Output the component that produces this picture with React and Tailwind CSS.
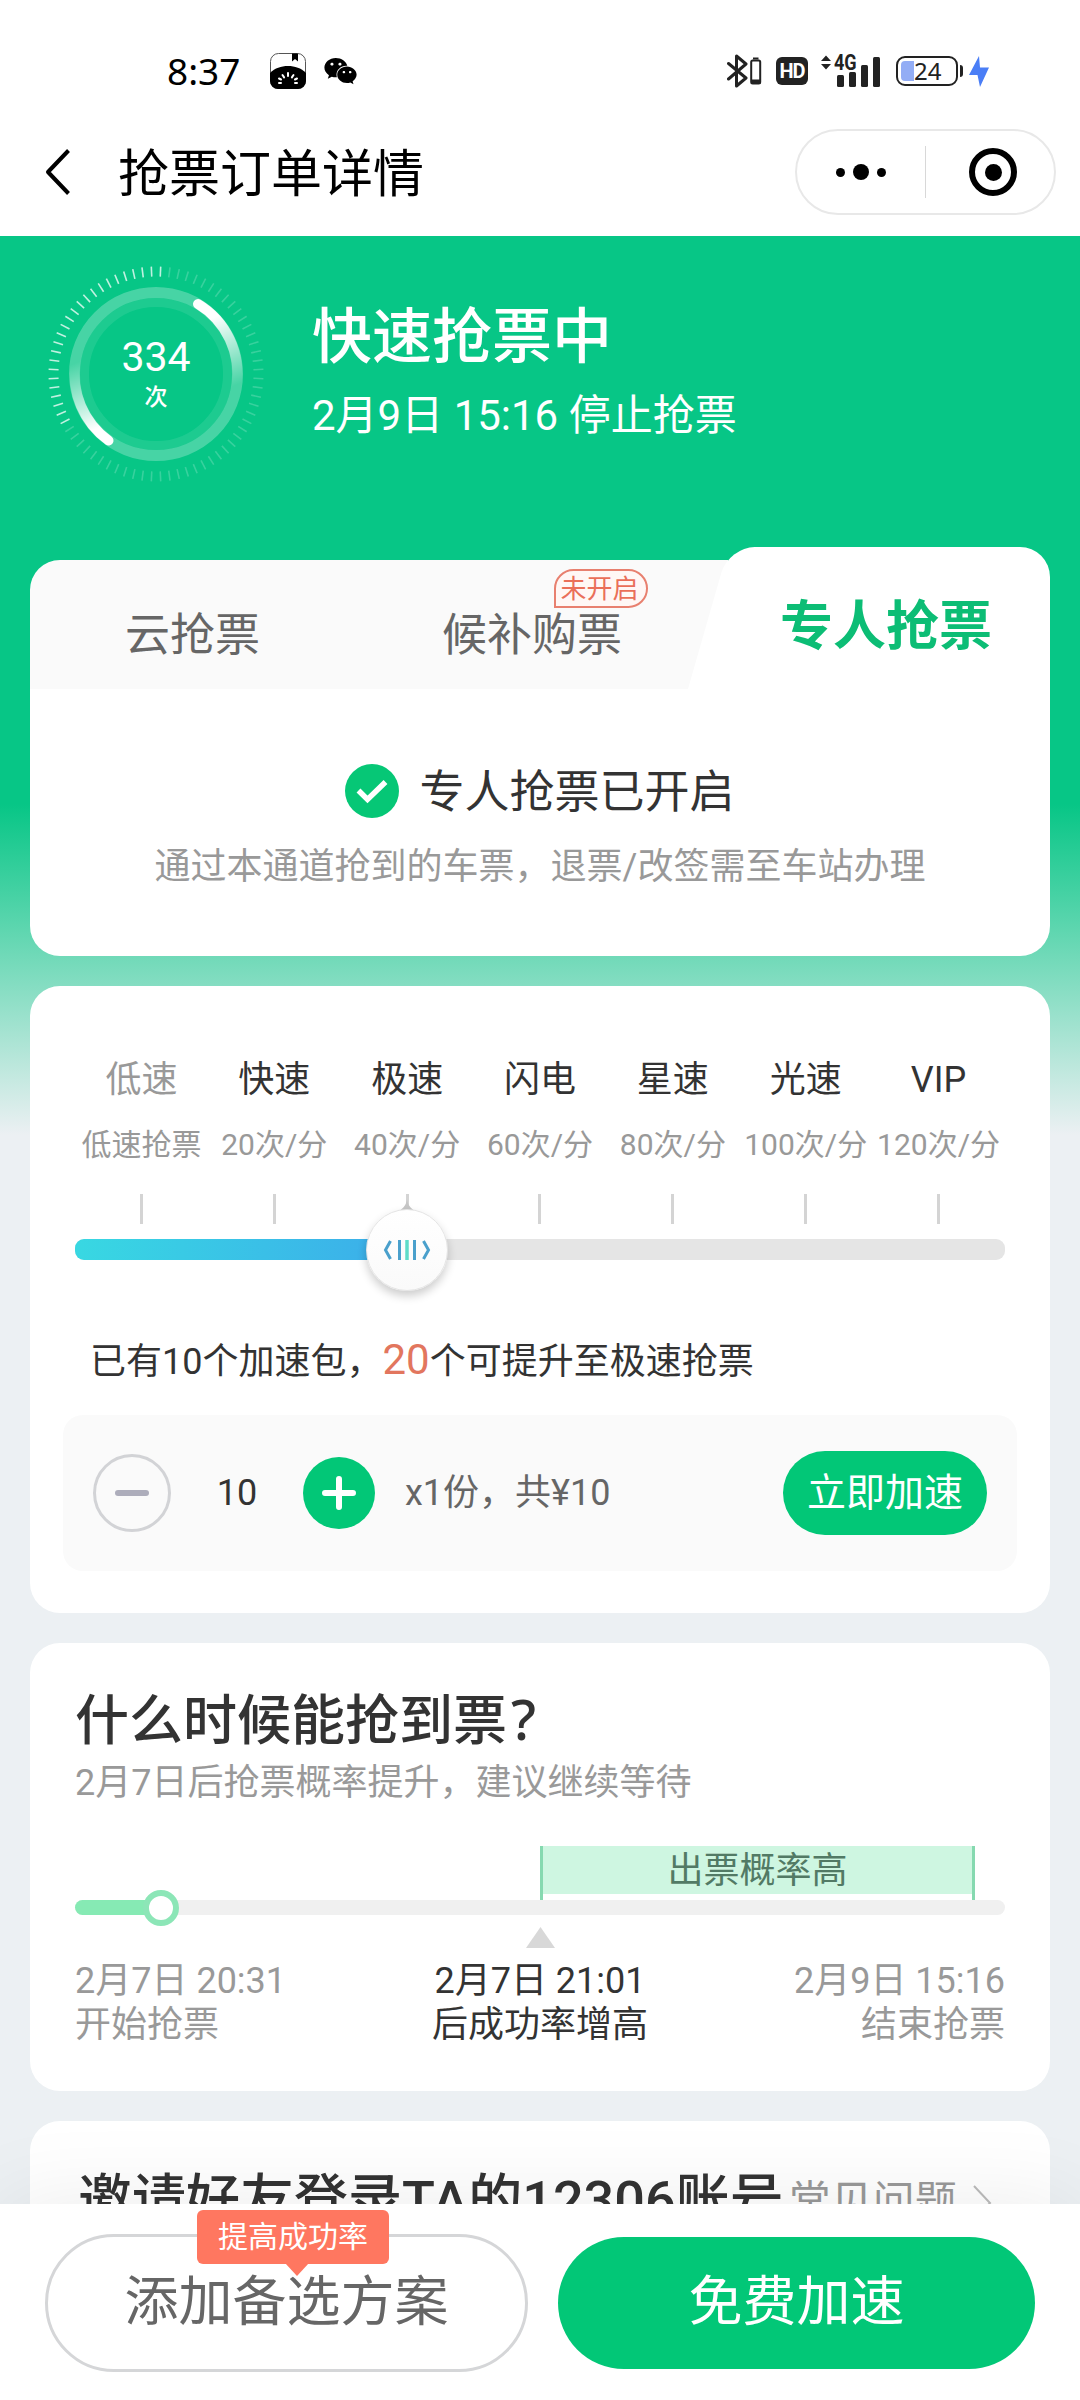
import { FaWeixin } from 'react-icons/fa';

const SPEEDS = [
  { name: '低速', rate: '低速抢票', disabled: true },
  { name: '快速', rate: '20次/分' },
  { name: '极速', rate: '40次/分' },
  { name: '闪电', rate: '60次/分' },
  { name: '星速', rate: '80次/分' },
  { name: '光速', rate: '100次/分' },
  { name: 'VIP', rate: '120次/分' },
];

const DIAL_TICKS = Array.from({ length: 72 }, (_, i) => i * 5 - 177.5);

function NotesAppIcon() {
  return (
    <svg className="h-9 w-9" viewBox="0 0 36 36" fill="none">
      <rect x="0.5" y="0.5" width="35" height="35" rx="8" stroke="#555" />
      <path d="M22 0.5h6v8l-3-2.500-3 2.500z" fill="#000" />
      <path d="M0 20C5 15 11 13 18 13s13 2 18 7v8a8 8 0 0 1-8 8H8a8 8 0 0 1-8-8z" fill="#000" />
      <g stroke="#fff" strokeWidth="2" strokeLinecap="round">
        <path d="M18 20v3M12.500 22l1.600 2.400M23.500 22l-1.600 2.400M9 25.500l2 1M27 25.500l-2 1M9 30h2M25 30h2" />
      </g>
    </svg>
  );
}

function BluetoothIcon() {
  return (
    <svg className="h-[34px] w-[36px]" viewBox="0 0 36 34" fill="none" stroke="#222">
      <path
        d="M1.500 9.500L19 24 9.500 32V2L19 10 1.500 25"
        strokeWidth="3"
        strokeLinejoin="round"
        strokeLinecap="round"
      />
      <rect x="24.200" y="6.500" width="9" height="23" rx="1.500" strokeWidth="2" />
      <path d="M26 4.500h5.500" strokeWidth="2" />
      <path d="M24 27.500h9.500" strokeWidth="4" />
    </svg>
  );
}

function SignalIcon() {
  return (
    <div className="relative h-8 w-[60px]">
      <svg className="h-8 w-[60px]" viewBox="0 0 60 32" fill="#222">
        <path d="M5 0.500l5 5.500H0zM5 14.500l5-5.500H0z" />
        <rect x="16" y="20" width="7" height="12" rx="1.500" />
        <rect x="28" y="17" width="7" height="15" rx="1.500" />
        <rect x="40" y="10" width="7" height="22" rx="1.500" />
        <rect x="52" y="2" width="7" height="30" rx="1.500" />
      </svg>
      <span className="absolute left-[13px] -top-px origin-left scale-x-[0.82] text-[22px] leading-[18px] font-bold text-[#222]">
        4G
      </span>
    </div>
  );
}

function StatusBar() {
  return (
    <div className="flex h-[106px] items-center pl-[167px] pr-[91px] pt-[36px]">
      <span className="w-[103px] pb-px font-['Noto_Sans'] text-[37px] leading-none text-black">8:37</span>
      <NotesAppIcon />
      <FaWeixin className="ml-[17px] h-[30px] w-[35px] text-black" />
      <div className="ml-auto flex items-center">
        <BluetoothIcon />
        <div className="ml-[13px] flex h-7 w-8 items-center justify-center rounded-md bg-[#222] text-[20px] leading-none font-bold tracking-tighter text-white">
          HD
        </div>
        <div className="ml-[13px]">
          <SignalIcon />
        </div>
        <div className="relative ml-[15px] flex h-[30px] w-[62px] items-center rounded-[9px] border-2 border-[#222] font-['Noto_Sans'] text-[24px] leading-none">
          <span className="ml-[3px] h-5 w-[13px] rounded-l-[4px] bg-[#93adf5]" />
          <span className="text-[#222]">24</span>
        </div>
        <span className="ml-0.5 h-3 w-[3px] rounded-r bg-[#222]" />
        <svg className="ml-[6px] h-[31px] w-5" viewBox="0 0 20 31" fill="#4a7ef6">
          <path d="M10 0L0 19h8.500L11 31l9-19.500h-9z" />
        </svg>
      </div>
    </div>
  );
}

function NavBar() {
  return (
    <div className="flex h-[130px] items-center pt-[2px] pl-[45px] pr-6">
      <svg className="h-[48px] w-[26px]" viewBox="0 0 26 48" fill="none" stroke="#000" strokeWidth="4">
        <path d="M23.500 2.500L3 24l20.500 21.500" strokeLinejoin="round" />
      </svg>
      <h1 className="ml-[47px] pt-[4px] text-[51px] leading-none text-black">抢票订单详情</h1>
      <div className="ml-auto flex h-[86px] w-[261px] items-center rounded-full border-2 border-[#e8e8e8]">
        <div className="flex w-[128px] items-center justify-center gap-[8px] text-black">
          <span className="h-[9px] w-[9px] rounded-full bg-black" />
          <span className="h-4 w-4 rounded-full bg-black" />
          <span className="h-[9px] w-[9px] rounded-full bg-black" />
        </div>
        <span className="h-[52px] w-px bg-[#d8d8d8]" />
        <div className="ml-[43px] flex h-12 w-12 items-center justify-center rounded-full border-[6px] border-black">
          <span className="h-[17px] w-[17px] rounded-full bg-black" />
        </div>
      </div>
    </div>
  );
}

function Dial() {
  return (
    <div className="relative h-[220px] w-[220px]">
      <svg className="h-full w-full" viewBox="-110 -110 220 220" fill="none">
        <defs>
          <linearGradient id="arcRight" gradientUnits="userSpaceOnUse" x1="44" y1="-70" x2="78" y2="12">
            <stop offset="0.2" stopColor="#fff" />
            <stop offset="1" stopColor="#fff" stopOpacity="0" />
          </linearGradient>
          <linearGradient id="arcLeft" gradientUnits="userSpaceOnUse" x1="-46" y1="68" x2="-78" y2="-12">
            <stop offset="0.2" stopColor="#fff" />
            <stop offset="1" stopColor="#fff" stopOpacity="0" />
          </linearGradient>
        </defs>
        {DIAL_TICKS.map((deg) => (
          <line
            key={deg}
            y1="-107.500"
            y2="-97.500"
            transform={`rotate(${deg})`}
            stroke="#fff"
            strokeWidth="1.600"
            strokeOpacity={deg >= -118 && deg <= 3 ? 0.75 : 0.2}
          />
        ))}
        <circle r="81.500" stroke="#fff" strokeOpacity="0.26" strokeWidth="11" />
        <circle r="71.500" stroke="#fff" strokeOpacity="0.09" strokeWidth="9" />
        <path d="M42 -70A81.500 81.500 0 0 1 80.500 12" stroke="url(#arcRight)" strokeWidth="10" strokeLinecap="round" />
        <path d="M-47.500 66.500A81.500 81.500 0 0 1 -80.500 -12" stroke="url(#arcLeft)" strokeWidth="10" strokeLinecap="round" />
      </svg>
      <div className="absolute inset-0 flex flex-col items-center pt-[71px] text-white">
        <span className="text-[41px] leading-[44px]">334</span>
        <span className="mt-[5px] text-[23px] leading-[28px] font-medium">次</span>
      </div>
    </div>
  );
}

function Hero() {
  return (
    <div className="flex h-[311px] pl-[46px] pt-[28px] text-white">
      <Dial />
      <div className="ml-[46px] pt-[42px]">
        <h2 className="text-[60px] leading-[64px] font-medium">快速抢票中</h2>
        <p className="mt-[24px] text-[42px] leading-[44px]">2月9日 15:16 停止抢票</p>
      </div>
    </div>
  );
}

function ChannelCard() {
  return (
    <section className="h-[409px]">
      <div className="flex h-[142px] items-end">
        <div className="flex h-[129px] w-[698px] rounded-tl-[30px] bg-[#fafafa] text-[45px] leading-none text-[#666]">
          <div className="flex w-[325px] items-center justify-center pt-[22px]">云抢票</div>
          <div className="relative flex w-[354px] items-center justify-center pt-[22px]">
            候补购票
            <span className="absolute left-[199px] top-[9px] flex h-[39px] w-[94px] items-center justify-center rounded-[20px] rounded-bl-none border-2 border-[#e8806f] bg-[#fff7f5] pr-[3px] text-[26px] text-[#ea6f59]">
              未开启
            </span>
          </div>
        </div>
        <div className="relative -ml-[40px] h-full flex-1">
          <span className="absolute bottom-0 left-0 h-full w-[200px] origin-bottom-left -skew-x-[16deg] rounded-tl-[26px] bg-white" />
          <span className="absolute bottom-0 right-0 h-full w-[280px] rounded-tr-[30px] bg-white" />
          <div className="relative flex h-full items-center pl-[92px] pt-[18px] text-[53px] leading-none font-bold text-[#0cbd75]">
            专人抢票
          </div>
        </div>
      </div>
      <div className="flex h-[267px] flex-col items-center rounded-b-[30px] bg-white pt-[75px]">
        <div className="flex items-center gap-5">
          <svg className="h-[54px] w-[54px]" viewBox="0 0 54 54" fill="none">
            <circle cx="27" cy="27" r="27" fill="#06c776" />
            <path d="M13.500 26.500l9 9L40.500 18" stroke="#fff" strokeWidth="5.500" />
          </svg>
          <span className="pt-[4px] text-[45px] leading-[50px] text-[#333]">专人抢票已开启</span>
        </div>
        <p className="mt-[29px] text-[36px] leading-[40px] text-[#999]">通过本通道抢到的车票，退票/改签需至车站办理</p>
      </div>
    </section>
  );
}

function SpeedCard() {
  return (
    <section className="mt-[30px] h-[627px] rounded-[30px] bg-white pt-[74px]">
      <div className="mx-[45px] grid grid-cols-7">
        {SPEEDS.map((s) => (
          <div key={s.name} className="flex flex-col items-center whitespace-nowrap">
            <span className={s.disabled ? 'text-[36px] leading-10 text-[#999]' : 'text-[36px] leading-10 text-[#333]'}>
              {s.name}
            </span>
            <span className="mt-[27px] text-[30px] leading-9 text-[#999]">{s.rate}</span>
            <span className="mt-[31px] h-[30px] w-[3px] bg-[#d4d4d4]" />
          </div>
        ))}
      </div>
      <div className="relative mx-[45px] mt-[15px] h-[21px] rounded-[9px] bg-[#e5e5e5]">
        <div className="h-full w-[332px] rounded-l-[9px] bg-linear-to-r from-[#38d8e2] to-[#3cacea]" />
        <svg className="absolute left-[324px] -top-[40px] h-3 w-4" viewBox="0 0 16 12" fill="#c6c6c6">
          <path d="M8 0C8.500 5 11 9 16 12H0C5 9 7.500 5 8 0z" />
        </svg>
        <div className="absolute left-[291px] -top-[30px] flex h-[82px] w-[82px] items-center justify-center rounded-full border border-[#e4e4e4] bg-linear-to-b from-white to-[#fafafa] shadow-[0_5px_10px_rgba(0,0,0,0.2)]">
          <svg className="h-[22px] w-[50px]" viewBox="0 0 50 22" fill="none" stroke="#4aa0cc" strokeWidth="3">
            <path d="M8.500 2L3.500 11l5 9M41.500 2L46.500 11l-5 9M17.500 1v20" />
            <path d="M32.500 1v20" />
            <path d="M25 1v20" stroke="#5fdcc8" strokeWidth="3.500" />
          </svg>
        </div>
      </div>
      <p className="ml-[60px] mt-[78px] text-[36px] leading-[48px] text-[#333]">
        已有10个加速包，<span className="text-[42px] leading-none text-[#e2765e]">20</span>个可提升至极速抢票
      </p>
      <div className="mx-[33px] mt-[29px] flex h-[156px] items-center rounded-[20px] bg-[#fafafa] px-[30px] text-[36px] leading-none text-[#333]">
        <button className="flex h-[78px] w-[78px] items-center justify-center rounded-full border-[3px] border-[#d2d3d6]">
          <span className="h-[6px] w-[34px] rounded-sm bg-[#adadbb]" />
        </button>
        <span className="w-[132px] text-center">10</span>
        <button className="flex h-[72px] w-[72px] items-center justify-center rounded-full bg-[#02c777]">
          <svg className="h-[34px] w-[34px]" viewBox="0 0 34 34" stroke="#fff" strokeWidth="6" strokeLinecap="round">
            <path d="M17 3v28M3 17h28" />
          </svg>
        </button>
        <span className="ml-[30px] text-[#666]">x1份，共¥10</span>
        <button className="ml-auto h-[84px] w-[204px] rounded-full bg-[#02c777] text-[39px] text-white">立即加速</button>
      </div>
    </section>
  );
}

function ForecastCard() {
  return (
    <section className="mt-[30px] h-[448px] rounded-[30px] bg-white px-[45px] pt-[47px]">
      <h2 className="h-[60px] text-[54px] leading-[60px] font-medium text-[#333]">
        什么时候能抢到票<span className="ml-[4px] font-['Noto_Sans'] text-[56px] leading-none">?</span>
      </h2>
      <p className="mt-[13px] text-[36px] leading-10 text-[#999]">2月7日后抢票概率提升，建议继续等待</p>
      <div className="ml-[465px] mt-[43px] h-[54px] w-[435px] border-x-[3px] border-[#86d9b0]">
        <div className="flex h-12 items-center justify-center bg-[#cef6e1] pt-[2px] text-[36px] leading-none text-[#527a65]">
          出票概率高
        </div>
      </div>
      <div className="relative h-[15px] rounded-lg bg-[#f0f0f0]">
        <div className="h-full w-[80px] rounded-l-lg bg-[#86eab4]" />
        <span className="absolute left-[68px] -top-[10px] h-[36px] w-[36px] rounded-full border-[6px] border-[#8ce6b7] bg-white" />
      </div>
      <svg className="mx-auto mt-[12px] h-[21px] w-[29px]" viewBox="0 0 29 21" fill="#d8d8d8">
        <path d="M14.500 0L29 21H0z" />
      </svg>
      <div className="mt-[12px] grid grid-cols-3 text-[36px] leading-[43.500px] text-[#999]">
        <div>
          2月7日 20:31
          <br />
          开始抢票
        </div>
        <div className="text-center text-[#333]">
          2月7日 21:01
          <br />
          后成功率增高
        </div>
        <div className="text-right">
          2月9日 15:16
          <br />
          结束抢票
        </div>
      </div>
    </section>
  );
}

function InviteCard() {
  return (
    <section className="mt-[30px] flex h-[300px] items-start whitespace-nowrap rounded-t-[30px] bg-white pl-[48px] pt-[50px]">
      <h2 className="text-[54px] leading-[60px] font-medium text-[#333]">邀请好友登录TA的12306账号</h2>
      <span className="ml-[5px] pt-px text-[42px] leading-[60px] text-[#999]">常见问题</span>
      <svg className="ml-[15px] mt-[13px] h-[38px] w-[20px]" viewBox="0 0 20 38" fill="none" stroke="#bbb" strokeWidth="2">
        <path d="M2 2l16 17L2 36" />
      </svg>
    </section>
  );
}

function BottomBar() {
  return (
    <footer className="relative flex h-[196px] bg-white pl-[45px] text-[54px] leading-none shadow-[0_0_90px_rgba(0,0,0,0.08)]">
      <button className="relative mt-[30px] h-[138px] w-[483px] rounded-full border-[3px] border-[#d5d6d8] text-[#666]">
        添加备选方案
        <span className="absolute left-[149px] -top-[27px] flex h-[54px] w-[192px] items-center justify-center rounded-md bg-[#ff7760] text-[30px] text-white">
          提高成功率
          <svg className="absolute left-[88px] top-[53px] h-[13px] w-[24px]" viewBox="0 0 24 13" fill="#ff7760">
            <path d="M0 0h24L12 13z" />
          </svg>
        </span>
      </button>
      <button className="ml-[30px] mt-[33px] h-[132px] w-[477px] rounded-full bg-[#02c777] text-white">免费加速</button>
    </footer>
  );
}

export default function App() {
  return (
    <div className="flex h-[2400px] w-[1080px] flex-col overflow-hidden bg-white font-[Roboto,'Noto_Sans_CJK_SC',sans-serif]">
      <header className="h-[236px] shrink-0">
        <StatusBar />
        <NavBar />
      </header>
      <main className="h-[1968px] shrink-0 overflow-hidden bg-linear-to-b/srgb from-[#07c686] from-[568px] to-[#ecf0f3] to-[899px]">
        <Hero />
        <div className="px-[30px]">
          <ChannelCard />
          <SpeedCard />
          <ForecastCard />
          <InviteCard />
        </div>
      </main>
      <BottomBar />
    </div>
  );
}
